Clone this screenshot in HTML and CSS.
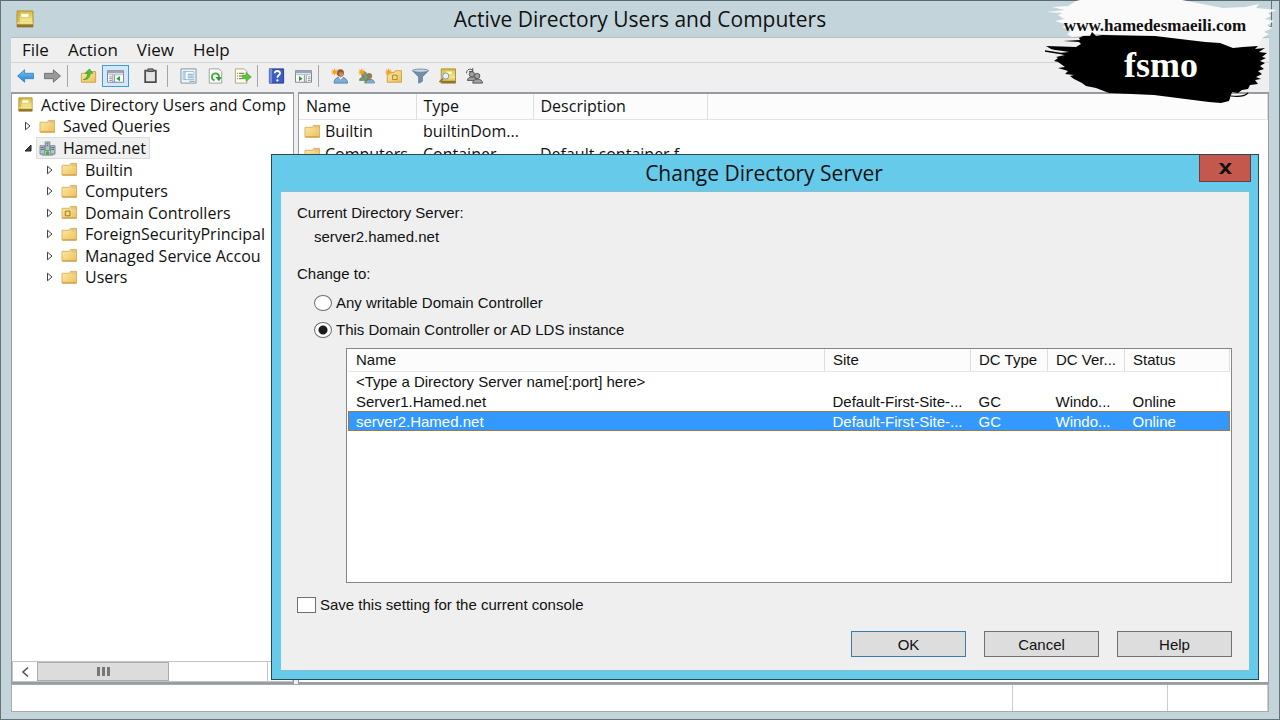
FILE: index.html
```html
<!DOCTYPE html>
<html lang="en">
<head>
<meta charset="utf-8">
<title>Active Directory Users and Computers</title>
<link rel="stylesheet" href="styles.css">
</head>
<body>
<svg class="defs" aria-hidden="true">
  <defs>
    <linearGradient id="gold" x1="0" y1="0" x2="1" y2="1"><stop offset="0" stop-color="#ffeaa8"/><stop offset="1" stop-color="#ecc05c"/></linearGradient>
    <linearGradient id="book" x1="0" y1="0" x2="0" y2="1"><stop offset="0" stop-color="#dcb93c"/><stop offset=".6" stop-color="#f4e58c"/><stop offset="1" stop-color="#c8a028"/></linearGradient>
    <linearGradient id="blue" x1="0" y1="0" x2="0" y2="1"><stop offset="0" stop-color="#7cc4f0"/><stop offset="1" stop-color="#1d84d2"/></linearGradient>
    <symbol id="folder" viewBox="0 0 18 16">
      <path d="M1 3.500h8l1-2h6.500v12.500H1z" fill="url(#gold)" stroke="#d8b060"/>
      <path d="M11.500 2.500h4v1.500h-4z" fill="#fff6d8" stroke="#c79f50" stroke-width=".6"/>
      <path d="M1.500 13.800h15" stroke="#c8963c"/>
    </symbol>
    <symbol id="console" viewBox="0 0 18 18">
      <path d="M1 1h16v16H1z" fill="url(#book)" stroke="#b09030"/>
      <path d="M1 1h3v16H1z" fill="#c4a030" opacity=".5"/>
      <path d="M5 3.500h8v4H5z" fill="#fffce8" stroke="#d8c070" stroke-width=".7"/>
      <path d="M1 14.500h16v2.500H1z" fill="#8c7434"/>
      <path d="M1 13h16" stroke="#fff4b0"/>
    </symbol>
    <symbol id="users" viewBox="0 0 20 18">
      <circle cx="7" cy="7" r="3"/><path d="M2 14c0-5 10-5 10 0z"/>
      <circle cx="13" cy="9" r="3"/><path d="M8 17c0-6 11-6 11 0z"/>
    </symbol>
    <symbol id="spark" viewBox="0 0 10 10"><path d="M5 0l1 3 3-2-2 3 3 1-3 1 2 3-3-2-1 3-1-3-3 2 2-3-3-1 3-1-2-3 3 2z" fill="#f4a024"/></symbol>
    <symbol id="closed" viewBox="0 0 8 10"><path d="M1.500 1.200v7.600L6 5z" fill="#fff" stroke="#444"/></symbol>
    <symbol id="open" viewBox="0 0 8 10"><path d="M7 2v6H1z" fill="#444" stroke="#222"/></symbol>
  </defs>
</svg>

<div class="window">
  <header class="titlebar">
    <svg class="title-icon"><use href="#console"/></svg>
    <h1>Active Directory Users and Computers</h1>
  </header>

  <nav class="menubar">
    <button>File</button><button>Action</button><button>View</button><button>Help</button>
  </nav>

  <div class="toolbar">
    <button aria-label="Back"><svg viewBox="0 0 20 18"><path d="M1 9l8-7v4h10v6H9v4z" fill="url(#blue)" stroke="#3b86bc"/></svg></button>
    <button aria-label="Forward"><svg viewBox="0 0 20 18"><path d="M19 9l-8-7v4H1v6h10v4z" fill="#999" stroke="#6c6c6c"/></svg></button>
    <span class="sep"></span>
    <button class="gap-left" aria-label="Up one level"><svg viewBox="0 0 20 18"><path d="M2 6h8l1-2h7v12H2z" fill="url(#gold)" stroke="#cc9c40"/><path d="M4 13c4-1 5-4 5-7H6l5-5 4 5h-3c0 5-4 8-8 7z" fill="#4cc034" stroke="#2c8c24" stroke-width=".6"/></svg></button>
    <button class="pressed" aria-label="Show console tree"><svg viewBox="0 0 20 18"><path d="M1 3h18v13H1z" fill="#fff" stroke="#707c88"/><path d="M1 3h18v3H1z" fill="#9aa6b4"/><path d="M2 7.500h16" stroke="#a4b0bc"/><path d="M7 8v8M9 8v8M3 10h3M3 12h3M3 14h3" stroke="#7c8898"/><path d="M15 9v6l-4-3z" fill="#20a020"/></svg></button>
    <button class="gap-mid" aria-label="Paste"><svg viewBox="0 0 20 18"><path d="M4 3h12v13H4z" fill="#e4e4e4" stroke="#4c4c4c" stroke-width="2"/><path d="M7 1h6v3H7z" fill="#888" stroke="#444"/></svg></button>
    <span class="sep"></span>
    <button class="gap-left" aria-label="Properties"><svg viewBox="0 0 20 18"><path d="M1.500 1h17v16h-17z" fill="#eef4f8" stroke="#808c98"/><path d="M4 4h12v9H4z" fill="#fff" stroke="#94b8d4"/><path d="M6 4v9M9 7h6M9 9h6M9 11h6M11 15h6" stroke="#6898c0"/></svg></button>
    <button aria-label="Refresh"><svg viewBox="0 0 20 18"><path d="M3 1h11l3 3v13H3z" fill="#fff" stroke="#9a9a9a"/><path d="M9 14a4 4 0 1 1 5-4" fill="none" stroke="#38b030" stroke-width="2"/><path d="M10 10h7l-3 5z" fill="#249c24"/></svg></button>
    <button aria-label="Export list"><svg viewBox="0 0 20 18"><path d="M2 1h10l3 3v13H2z" fill="#fffbe4" stroke="#aaa088"/><path d="M4 6h1M4 9h1M4 12h1M6 6h6M6 9h4M6 12h4" stroke="#555"/><path d="M10 8h4V5l6 5-6 5v-3h-4z" fill="#58c838" stroke="#38982c" stroke-width=".6"/></svg></button>
    <span class="sep"></span>
    <button class="gap-small" aria-label="Help"><svg viewBox="0 0 20 18"><path d="M2 1h16v16H2z" fill="#3c5cc4" stroke="#203884"/><path d="M2 1h3v16H2z" fill="#7890dc"/><path d="M8 6c0-4 6-3 6 0 0 2-3 2-3 5" fill="none" stroke="#fff" stroke-width="2"/><circle cx="11" cy="14" r="1.300" fill="#fff"/></svg></button>
    <button aria-label="Show action pane"><svg viewBox="0 0 20 18"><path d="M1 3h18v13H1z" fill="#fff" stroke="#707c88"/><path d="M1 3h18v3H1z" fill="#9aa6b4"/><path d="M2 7.500h16" stroke="#a4b0bc"/><path d="M11 8v8M13 8v8M15 10h3M15 12h3M15 14h3" stroke="#7c8898"/><path d="M5 9v6l4-3z" fill="#20a020"/></svg></button>
    <span class="sep"></span>
    <button class="gap-left" aria-label="New user"><svg viewBox="0 0 20 18"><path d="M4 17c-1-9 15-9 15 0z" fill="#80acd8" stroke="#4c7cac"/><path d="M9 10l2 3 3-3z" fill="#fff"/><circle cx="11" cy="5.500" r="4" fill="#8c5c38"/><path d="M9 5h5v4l-3 2z" fill="#c88c5c"/><use href="#spark" width="9" height="9"/></svg></button>
    <button aria-label="New group"><svg viewBox="0 0 20 18"><g fill="#7c9870" stroke="#54704c" stroke-width=".6"><use href="#users"/></g><circle cx="13" cy="9" r="2.500" fill="#a8744c"/><path d="M10 17c0-5 9-5 9 0z" fill="#78a8d8"/><use href="#spark" width="9" height="9"/></svg></button>
    <button aria-label="New organizational unit"><svg viewBox="0 0 20 18"><path d="M3 5h8l1-2h7v13H3z" fill="url(#gold)" stroke="#cc9c40"/><path d="M9 8h5v5H9z" fill="#f8e070" stroke="#98803c"/><use href="#spark" width="9" height="9"/></svg></button>
    <button aria-label="Filter"><svg viewBox="0 0 20 18"><path d="M1 3l7 7v7l4-2v-5l7-7z" fill="#7090ac" stroke="#587490"/><ellipse cx="10" cy="3" rx="9" ry="1.800" fill="#c4d8e8" stroke="#6c8498"/></svg></button>
    <button aria-label="Find"><svg viewBox="0 0 20 18"><path d="M3 1h16v16H3z" fill="url(#book)" stroke="#a88c34"/><path d="M8 4h7v3H8z" fill="#fff8d0"/><path d="M3 14.500h16V17H3z" fill="#8c7434"/><circle cx="8" cy="9" r="3.500" fill="#e4f0f8" stroke="#7c8c94"/><path d="M5 12l-4 4" stroke="#8c7850" stroke-width="2"/></svg></button>
    <button aria-label="Add to group"><svg viewBox="0 0 20 18"><g fill="#a0a0a0" stroke="#505050"><use href="#users"/></g><path d="M1 6c0-5 5-6 7-3M8 0v4H4" fill="none" stroke="#404040"/></svg></button>
  </div>

  <main class="panes">
    <section class="tree-pane">
      <ul class="tree">
        <li><svg class="icon"><use href="#console"/></svg><span>Active Directory Users and Comp</span></li>
        <li class="l1"><svg class="twist"><use href="#closed"/></svg><svg class="icon"><use href="#folder"/></svg><span>Saved Queries</span></li>
        <li class="l1"><svg class="twist"><use href="#open"/></svg><span class="selected"><svg class="icon" viewBox="0 0 18 16"><path d="M1 5h5v9H1zM12 5h5v9h-5zM6.500 1h5v9h-5z" fill="#b4c4cc" stroke="#788890"/><path d="M2 7h3M2 9h3M13 7h3M13 9h3M8 3h2M8 5h2" stroke="#50606c"/><path d="M3 15h12M9 11v4" stroke="#6c8078"/><path d="M7 11h4v4H7z" fill="#40b840"/></svg>Hamed.net</span></li>
        <li class="l2"><svg class="twist"><use href="#closed"/></svg><svg class="icon"><use href="#folder"/></svg><span>Builtin</span></li>
        <li class="l2"><svg class="twist"><use href="#closed"/></svg><svg class="icon"><use href="#folder"/></svg><span>Computers</span></li>
        <li class="l2"><svg class="twist"><use href="#closed"/></svg><svg class="icon" viewBox="0 0 18 16"><use href="#folder"/><path d="M4.500 6.500h5v5h-5z" fill="#f4dc60" stroke="#8c7838"/></svg><span>Domain Controllers</span></li>
        <li class="l2"><svg class="twist"><use href="#closed"/></svg><svg class="icon"><use href="#folder"/></svg><span>ForeignSecurityPrincipal</span></li>
        <li class="l2"><svg class="twist"><use href="#closed"/></svg><svg class="icon"><use href="#folder"/></svg><span>Managed Service Accou</span></li>
        <li class="l2"><svg class="twist"><use href="#closed"/></svg><svg class="icon"><use href="#folder"/></svg><span>Users</span></li>
      </ul>
      <div class="scrollbar">
        <button aria-label="Scroll left"><svg viewBox="0 0 10 12"><path d="M8 1.500L3 6l5 4.500" fill="none" stroke="#555" stroke-width="1.600"/></svg></button>
        <div class="thumb"><i></i><i></i><i></i></div>
        <div class="track"></div>
        <button aria-label="Scroll right"></button>
      </div>
    </section>
    <section class="list-pane">
      <table class="objects">
        <colgroup><col class="c-name"><col class="c-type"><col class="c-desc"><col></colgroup>
        <thead><tr><th>Name</th><th>Type</th><th>Description</th><th></th></tr></thead>
        <tbody>
          <tr><td><svg class="icon"><use href="#folder"/></svg>Builtin</td><td>builtinDom...</td><td></td><td></td></tr>
          <tr><td><svg class="icon"><use href="#folder"/></svg>Computers</td><td>Container</td><td>Default container f...</td><td></td></tr>
        </tbody>
      </table>
    </section>
  </main>

  <footer class="statusbar"><span></span><span></span><span></span></footer>
</div>

<div class="dialog" role="dialog" aria-labelledby="dialog-title">
  <header class="dialog-title">
    <h2 id="dialog-title">Change Directory Server</h2>
    <button class="close" aria-label="Close"><svg viewBox="0 0 16 14"><path d="M1 1h4l3 4 3-4h4l-5 6 5 6h-4L8 9.500 5 13H1l5-6z" fill="#111"/></svg></button>
  </header>
  <form class="dialog-body">
    <p class="caption">Current Directory Server:</p>
    <p class="current">server2.hamed.net</p>
    <p class="caption">Change to:</p>
    <label class="choice"><input type="radio" name="target">Any writable Domain Controller</label>
    <label class="choice"><input type="radio" name="target" checked>This Domain Controller or AD LDS instance</label>
    <div class="server-list">
      <table>
        <colgroup><col><col class="s-site"><col class="s-dc"><col class="s-dc"><col class="s-status"></colgroup>
        <thead><tr><th>Name</th><th>Site</th><th>DC Type</th><th>DC Ver...</th><th>Status</th></tr></thead>
        <tbody>
          <tr><td>&lt;Type a Directory Server name[:port] here&gt;</td><td></td><td></td><td></td><td></td></tr>
          <tr><td>Server1.Hamed.net</td><td>Default-First-Site-...</td><td>GC</td><td>Windo...</td><td>Online</td></tr>
          <tr class="active"><td>server2.Hamed.net</td><td>Default-First-Site-...</td><td>GC</td><td>Windo...</td><td>Online</td></tr>
        </tbody>
      </table>
    </div>
    <label class="save"><input type="checkbox">Save this setting for the current console</label>
    <div class="actions">
      <button type="button" class="default">OK</button>
      <button type="button">Cancel</button>
      <button type="button">Help</button>
    </div>
  </form>
</div>

<div class="brand">
  <svg viewBox="0 0 250 110" aria-hidden="true">
    <path d="M236 26.500h5.500V1" fill="none" stroke="#66747a"/>
    <path d="M50 0H152l20 4 21 4 22-1 14-3-3 4 21 2-9 3 3 3-6 3 9 2-7 4 5 3-8 4 5 2-7 4-4 8-25 3L190 43 125 37 66 34 42 37l-5-3 4-3-9-4 5-2-12-4 9-2-6-4 5-2-17-1 19-2-13-3 16-1 8-5z" fill="#fafafa"/>
    <path d="M60 36l2-4 4 4 6-1 53 1 50 6 15 1 13 5 10-1 15-1-3 3 10-1-6 4 8 1-5 4 4 1-6 3 5 2-5 3 4 3-6 2 4 3-6 3 5 2-6 1 3 4-8 1-2 4-6 1-4 3-6-1-3 9-8 2-12-1-55-7-45-2-13-5-10-2-4-3-8-4-4-3 4-1-9-1 3-3-10-3 7-1-7-5-4-1 4-3-2-1 9-2-6-2 10-1-6-1-8-1-4-1-5-3 30 1 5-3-2-2-16-1 17-1-1-2 4-2z" fill="#000"/>
    <path d="M173 96c8 1 14 0 17-3" transform="translate(28)" fill="none" stroke="#000" stroke-width="1.200"/>
    <path d="M15 51l25 4" stroke="#000" stroke-width="1.500"/>
  </svg>
  <p class="site">www.hamedesmaeili.com</p>
  <p class="topic">fsmo</p>
</div>
</body>
</html>
```
FILE: styles.css
```css
* { box-sizing: border-box; }
body {
  margin: 0;
  position: relative;
  min-height: 100vh;
  overflow: hidden;
  background: #c3d5db;
  color: #111;
  font-family: "Open Sans", "Noto Sans", sans-serif;
  font-size: 16px;
}
h1, h2, p, ul { margin: 0; padding: 0; font-weight: 400; }
button { font: inherit; color: inherit; padding: 0; border: 0; background: none; }
.defs { position: absolute; width: 0; height: 0; }

.window {
  display: flex;
  flex-direction: column;
  height: 100vh;
  padding: 0 10px 7px;
  border: 1px solid #66747a;
  border-top-color: #5c6a72;
}
.titlebar { display: flex; align-items: center; height: 36px; }
.title-icon { width: 18px; height: 18px; margin-left: 5px; }
h1 { flex: 1; text-align: center; font-size: 21px; line-height: 36px; padding-right: 23px; }

.menubar {
  display: flex;
  gap: 19px;
  height: 26px;
  padding-left: 11px;
  background: #efefef;
  border-top: 1px solid #b4c2c6;
  border-bottom: 1px solid #d4d4d4;
  font-size: 17px;
  line-height: 24px;
}
.toolbar {
  display: flex;
  align-items: center;
  height: 29px;
  padding: 0 0 4px 1px;
  background: #efefef;
}
.toolbar button { width: 27px; height: 22px; display: grid; place-items: center; }
.toolbar svg { width: 19px; height: 16px; }
.toolbar .pressed { border: 1px solid #3c9cdc; background: #d4e8f8; }
.toolbar .gap-left { margin-left: 7px; }
.toolbar .gap-small { margin-left: 5px; }
.toolbar .gap-mid { margin: 0 2px 0 8px; }
.sep { width: 1px; height: 22px; margin-left: 1px; background: #a4a4a4; }

.panes { flex: 1; display: flex; gap: 4px; min-height: 0; background: #efefef; }
.tree-pane, .list-pane {
  background: #fff;
  border: 1px solid #969ca2;
  border-top-width: 2px;
  border-bottom-width: 2px;
  overflow: hidden;
}
.tree-pane { width: 283px; display: flex; flex-direction: column; }
.list-pane { flex: 1; }
.tree {
  display: grid;
  grid-auto-rows: 1fr;
  height: 194px;
  list-style: none;
  white-space: nowrap;
  line-height: 20px;
}
.tree li { display: flex; align-items: center; gap: 7px; padding-left: 5px; }
.tree .l1 { padding-left: 12px; }
.tree .l2 { padding-left: 34px; }
.icon { width: 17px; height: 15px; flex: none; }
.twist { width: 8px; height: 10px; flex: none; }
.selected {
  display: flex;
  align-items: center;
  gap: 7px;
  height: 22px;
  margin-left: -3px;
  padding: 0 3px 0 2px;
  background: #f0f0f0;
  border: 1px solid #dcdcdc;
}
.scrollbar {
  display: flex;
  height: 21px;
  margin-top: auto;
  border: 1px solid #c4c4c4;
  background: #fff;
}
.scrollbar button { width: 24px; display: grid; place-items: center; }
.scrollbar svg { width: 10px; height: 12px; }
.thumb {
  display: flex;
  justify-content: center;
  align-items: center;
  gap: 2px;
  width: 132px;
  background: #dcdcdc;
  border: 1px solid #acacac;
}
.thumb i { width: 3px; height: 9px; background: #777; }
.track { flex: 1; border-right: 1px solid #c4c4c4; }

table { border-collapse: collapse; table-layout: fixed; width: 100%; }
th, td { padding: 0 0 0 7px; text-align: left; font-weight: 400; white-space: nowrap; overflow: hidden; }
.objects { line-height: 20px; }
.objects th { height: 25px; background: #fcfcfc; border-right: 1px solid #dedede; border-bottom: 1px solid #e4e4e4; }
.objects td { height: 23px; }
.objects td:first-child { padding-left: 5px; }
.objects td .icon { vertical-align: -2px; margin-right: 4px; }
.c-name { width: 117px; }
.c-type { width: 117px; }
.c-desc { width: 174px; }

.statusbar { display: flex; height: 28px; background: #fff; border: 1px solid #a4acb0; }
.statusbar span { width: 100px; border-right: 1px solid #ccc; }
.statusbar span:first-child { flex: 1; }
.statusbar span:nth-child(2) { width: 155px; }

.dialog {
  position: absolute;
  inset: 154px 21px 40px 271px;
  display: flex;
  flex-direction: column;
  padding: 0 9px 8px;
  background: #66caea;
  border: 1px solid #2c4854;
  font-family: "Liberation Sans", Arial, sans-serif;
  font-size: 15px;
}
.dialog-title { display: flex; height: 36px; flex: none; }
h2 {
  flex: 1;
  padding-left: 48px;
  text-align: center;
  font: 21px/36px "Open Sans", "Noto Sans", sans-serif;
}
.close {
  display: grid;
  place-items: center;
  width: 52px;
  height: 27px;
  margin-right: -2px;
  background: #c4584c;
  border: 1px solid #6c3c3c;
  border-top: 0;
}
.close svg { width: 17px; height: 13px; }
.dialog-body {
  flex: 1;
  display: flex;
  flex-direction: column;
  padding: 11px 17px 13px 16px;
  background: #efefef;
  border: 1px solid #8cbccc;
  border-width: 1px 0;
}
.caption, .current { line-height: 20px; }
.current { margin: 4px 0 17px 17px; }
.choice, .save { display: flex; align-items: center; gap: 4px; line-height: 20px; }
.choice { margin: 9px 0 0 17px; }
.choice + .choice { margin-top: 7px; }
input { appearance: none; flex: none; margin: 0; background: #fff; border: 1px solid #707070; }
input[type="radio"] { width: 18px; height: 16px; border-radius: 50%; }
input[type="radio"]:checked { background: radial-gradient(circle, #1c1c1c 0 4px, #fff 5px); }
input[type="checkbox"] { width: 19px; height: 16px; }
.server-list {
  flex: 1;
  margin: 8px 0 12px 49px;
  padding: 0 1px;
  background: #fff;
  border: 1px solid #82878f;
}
.server-list th { height: 22px; background: #fcfcfc; border-right: 1px solid #dedede; border-bottom: 1px solid #e4e4e4; }
.server-list td { height: 20px; }
.server-list th, .server-list td { padding-left: 8px; }
.s-site { width: 146px; }
.s-dc { width: 77px; }
.s-status { width: 105px; }
.active { background: #3399ff; color: #fff; outline: 1px solid #a07848; outline-offset: -1px; }
.actions { display: flex; justify-content: flex-end; gap: 18px; margin-top: 16px; }
.actions button { width: 115px; height: 26px; background: #ddd; border: 1px solid #707070; }
.actions .default { border-color: #3c7cac; }

.brand { position: absolute; top: 0; right: 0; width: 250px; height: 110px; text-align: center; }
.brand svg { position: absolute; inset: 0; width: 100%; height: 100%; }
.brand p { position: relative; font-family: "Liberation Serif", serif; font-weight: 700; }
.site { padding-top: 16px; font-size: 17px; line-height: 20px; color: #111; }
.topic { padding-left: 12px; font-size: 36px; line-height: 58px; color: #fff; }
```
